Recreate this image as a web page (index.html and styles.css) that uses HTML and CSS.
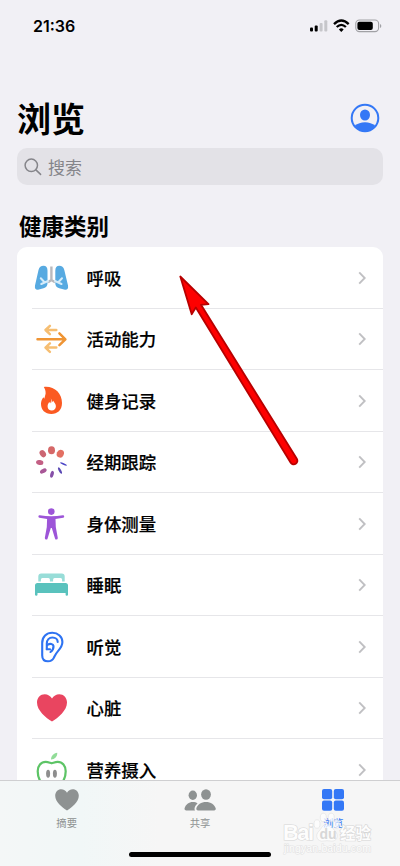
FILE: index.html
```html
<!DOCTYPE html>
<html lang="zh-CN">
<head>
<meta charset="utf-8">
<title>浏览</title>
<link rel="stylesheet" href="styles.css">
</head>
<body>
<div class="phone">
  <header class="status">
    <span class="time">21:36</span>
    <svg class="status-icons" width="74" height="20" viewBox="0 0 74 20">
      <rect x="2" y="12.5" width="3" height="4" rx="1"/><rect x="6.7" y="10.5" width="3" height="6" rx="1"/>
      <rect x="11.6" y="8" width="3" height="8.5" rx="1" fill="#c6c6ca"/><rect x="16.3" y="5.2" width="3" height="11.3" rx="1" fill="#c6c6ca"/>
      <g fill="none" stroke="#000" stroke-width="2.3"><path d="M26 9.1Q33.3 1.9 40.7 9.1"/><path d="M28.7 12Q33.3 7.7 37.9 12"/></g>
      <path d="M33.3 17l-2.4-2.6Q33.3 12.3 35.7 14.4z"/>
      <rect x="47.8" y="5" width="22.8" height="11.6" rx="3.6" fill="none" stroke="#a1a1a5" stroke-width="1.1"/>
      <rect x="49.4" y="6.7" width="15.4" height="8.2" rx="2"/><path d="M72 9v4q1.3-.6 1.3-2T72 9" fill="#a1a1a5"/>
    </svg>
  </header>
  <div class="title-row">
    <h1>浏览</h1>
    <svg width="30" height="30" viewBox="0 0 30 30"><circle cx="15" cy="15" r="13.3" fill="none" stroke="#3478f6" stroke-width="2"/><ellipse cx="15" cy="12" rx="5" ry="5.6" fill="#3478f6"/><path d="M4.700 22.800Q9 19.200 15 19.200T25.300 22.800Q21.500 28.500 15 28.500T4.700 22.800" fill="#3478f6"/></svg>
  </div>
  <div class="search">
    <svg width="18" height="18" viewBox="0 0 18 18" fill="none" stroke="#85858a" stroke-width="1.5" stroke-linecap="round"><circle cx="7.3" cy="7.3" r="6.2"/><path d="M11.9 11.9l4.7 4.5"/></svg>
    <span>搜索</span>
  </div>
  <h2>健康类别</h2>
  <main class="list">
    <div class="row">
      <svg class="icon" viewBox="0 0 40 40">
        <path fill="#57aae1" d="M11.5 7.8q4 0 4 5v12.5q0 4-4 5L6 31.8Q2.3 32 3 27.5L6.5 12Q7.7 7.8 11.5 7.8zM27.3 7.8q-4 0-4 5v12.5q0 4 4 5L33 31.8Q36.7 32 36 27.5L32.3 12Q31.1 7.8 27.3 7.8z"/>
        <path d="M19.4 8.5V22L16 24.2M19.4 22l3.6 2.2" fill="none" stroke="#b9b9bd" stroke-width="2.4"/>
        <path d="M16 23L9.3 26M12.5 24.3L8.8 20.3M23 23l6.5 3M26.3 24.3L30 20.3" stroke="#d5ecfa" stroke-width="2" fill="none" stroke-linecap="round"/>
      </svg><span>呼吸</span><svg class="chevron" viewBox="0 0 8 14"><path d="M1.2 1.4L6.7 7L1.2 12.6"/></svg>
    </div>
    <div class="row">
      <svg class="icon" viewBox="0 0 40 40" fill="none" stroke-linecap="round" stroke-linejoin="round" stroke-width="2.5"><path stroke="#f6be72" d="M24.3 11H13.7M17.9 6.8L13.5 11l4.4 4.2M24.3 28.6H13.7M17.9 24.4l-4.4 4.2 4.4 4.2"/><path stroke="#ef9535" d="M5.5 20.3H33M27.4 14.4l6 5.9-6 5.9"/></svg>
      <span>活动能力</span><svg class="chevron" viewBox="0 0 8 14"><path d="M1.2 1.4L6.7 7L1.2 12.6"/></svg>
    </div>
    <div class="row">
      <svg class="icon" viewBox="0 0 40 40"><path fill="#fb5a22" d="M11.8 6C22 4.8 30 12 30 22c0 7-4.5 11-10.6 11C13 33 9 28.8 9 23c0-3 1-5 2.3-6.800l1 1.600 1.300-5C13.800 10 13 7.700 11.800 6z"/><path fill="#fff" d="M18.800 17.500c1 1.500 1 3 .8 4.300l1.600-2c1.300 2 2.700 3.500 2.700 5.500 0 2.600-1.700 4.200-4.100 4.200s-4.200-1.600-4.200-4.100c0-1.900.8-3.200 1.600-4.400l1 1.200c.8-1.300 1.200-2.900.6-4.700z"/></svg>
      <span>健身记录</span><svg class="chevron" viewBox="0 0 8 14"><path d="M1.2 1.4L6.7 7L1.2 12.6"/></svg>
    </div>
    <div class="row">
      <svg class="icon" viewBox="0 0 40 40"><ellipse cx="19.5" cy="8.3" rx="3.5" ry="4" fill="#d56868"/><ellipse cx="28.3" cy="11.7" rx="3.5" ry="4" fill="#e37063" transform="rotate(25 28.3 11.7)"/><ellipse cx="10.8" cy="11.7" rx="2.9" ry="3.8" fill="#cc6673" transform="rotate(-35 10.8 11.7)"/><ellipse cx="7.7" cy="20.5" rx="3.7" ry="2.5" fill="#c35f84" transform="rotate(10 7.7 20.5)"/><ellipse cx="11.3" cy="29" rx="3.6" ry="2.1" fill="#a85797" transform="rotate(-28 11.3 29)"/><ellipse cx="20" cy="32.3" rx="1.7" ry="3.5" fill="#8650a8" transform="rotate(15 20 32.3)"/><ellipse cx="28" cy="28.6" rx="1.2" ry="3.6" fill="#5c4bb5" transform="rotate(-28 28 28.6)"/><ellipse cx="31.5" cy="22" rx="3.6" ry=".8" fill="#4a45c6" transform="rotate(25 31.5 22)"/></svg>
      <span>经期跟踪</span><svg class="chevron" viewBox="0 0 8 14"><path d="M1.2 1.4L6.7 7L1.2 12.6"/></svg>
    </div>
    <div class="row">
      <svg class="icon" viewBox="0 0 40 40"><g fill="#9d55d8"><circle cx="19.3" cy="7.6" r="3.3"/><path d="M7.8 11.3Q19.3 13.2 30.8 11.3a1.2 1.2 0 0 1 .4 2.4L23.5 15l.3 8 2 11q0 1.600-1.500 1.600-1 0-1.300-1.200L19.800 24h-1L15.600 34.400q-.3 1.200-1.300 1.200-1.500 0-1.500-1.600l2-11 .3-8-7.700-1.300a1.200 1.200 0 0 1 .4-2.400z"/></g></svg>
      <span>身体测量</span><svg class="chevron" viewBox="0 0 8 14"><path d="M1.2 1.4L6.7 7L1.2 12.6"/></svg>
    </div>
    <div class="row">
      <svg class="icon" viewBox="0 0 40 40"><path fill="#98ddd8" d="M9.3 8.500h20.400q3 0 3 3v4.900h-2.600v-2q0-1.500-1.500-1.500h-6q-1.500 0-1.500 1.500v2h-3.200v-2q0-1.500-1.500-1.500h-6q-1.500 0-1.500 1.500v2H6.300v-4.900q0-3 3-3z"/><path fill="#59c2bd" d="M5.500 18h28q2.500 0 2.500 2.500v9.300q0 1-1.200 1t-1.200-1v-1.900H5.500v1.900q0 1-1.200 1t-1.300-1v-9.300Q3 18 5.500 18z"/></svg>
      <span>睡眠</span><svg class="chevron" viewBox="0 0 8 14"><path d="M1.2 1.4L6.7 7L1.2 12.6"/></svg>
    </div>
    <div class="row">
      <svg class="icon" viewBox="0 0 40 40" fill="none" stroke="#2e73f2" stroke-width="2.1" stroke-linecap="round" stroke-linejoin="round"><path d="M10.2 16C10.2 9.500 14.500 5.800 20.300 5.800s10.100 4 10.100 9.300c0 4-2 6.500-4.600 9.300-2.300 2.500-3 4.500-4 6.500-1.200 2.300-3.300 3.400-5.800 3.400-3.600 0-5.800-2.300-5.800-5.800z"/><path d="M14.800 22.200v-5.700c0-3.600 2.300-6 5.600-6s5.300 2 5.300 4.500"/><path d="M15.500 17.800c2.500-1.600 5.700-1 6 1.200.2 2.700-1 4.500-3 6M14.800 22.200h3.200"/></svg>
      <span>听觉</span><svg class="chevron" viewBox="0 0 8 14"><path d="M1.2 1.4L6.7 7L1.2 12.6"/></svg>
    </div>
    <div class="row">
      <svg class="icon" viewBox="0 0 40 40"><path fill="#e94560" d="M20 33.600C14 30 5 22.700 5 14.600 5 9.700 8.500 6.300 12.700 6.300c3.100 0 5.700 1.700 7.300 4.300 1.600-2.600 4.200-4.300 7.300-4.300 4.200 0 7.700 3.400 7.700 8.300C35 22.700 26 30 20 33.600z"/></svg>
      <span>心脏</span><svg class="chevron" viewBox="0 0 8 14"><path d="M1.2 1.4L6.7 7L1.2 12.6"/></svg>
    </div>
    <div class="row">
      <svg class="icon" viewBox="0 0 40 40"><path d="M19.700 13.300c-2-.5-3.500-1.400-6-1.400-4.700 0-8 4-8 9.300 0 7.500 4.500 15 9 15 2 0 3-1 5-1s3 1 5 1c4.500 0 9-7.500 9-15 0-5.300-3.300-9.300-8-9.300-2.500 0-4 .9-6 1.400z" fill="none" stroke="#5dc466" stroke-width="2.2"/><path fill="#91dc98" d="M19 9.600c0-3.700 2.500-6.200 6.300-6.800 0 3.900-2.400 6.600-6.300 6.800z"/><ellipse cx="16.1" cy="23.8" rx="2" ry="4" fill="#8e8e8e"/><ellipse cx="22.9" cy="23.8" rx="2" ry="4" fill="#8e8e8e"/></svg>
      <span>营养摄入</span><svg class="chevron" viewBox="0 0 8 14"><path d="M1.2 1.4L6.7 7L1.2 12.6"/></svg>
    </div>
  </main>
  <nav class="tabs">
    <div class="tab"><svg width="34" height="24" viewBox="0 0 34 24"><path fill="#8e9292" d="M17 22.500C12 19.500 5.200 14 5.200 7.800 5.200 3.900 8 1.200 11.200 1.200c2.500 0 4.600 1.400 5.800 3.500 1.200-2.100 3.300-3.500 5.800-3.500 3.200 0 6 2.700 6 6.600C28.800 14 22 19.500 17 22.500z"/></svg><span>摘要</span></div>
    <div class="tab"><svg width="34" height="24" viewBox="0 0 34 24" fill="#8e9292"><ellipse cx="9.8" cy="7.3" rx="4.2" ry="4.7"/><ellipse cx="23" cy="6.500" rx="4.900" ry="5.200"/><path d="M3 22.400q-1.800 0-1.500-1.800C2.500 16.500 6 14 9.800 14c2 0 3.500.5 4.800 1.400-2 1.600-3 3.600-3.100 5.300q0 1 .5 1.700zM14.800 22.400q-1.800 0-1.500-1.800c.9-4 5-6.700 9.700-6.700s8.800 2.700 9.800 6.700q.3 1.800-1.500 1.800z"/></svg><span>共享</span></div>
    <div class="tab active"><svg width="34" height="24" viewBox="0 0 34 24" fill="#3478f6"><rect x="6" y="1" width="10.2" height="10.2" rx="2"/><rect x="17.8" y="1" width="10.2" height="10.2" rx="2"/><rect x="6" y="12.6" width="10.2" height="10.2" rx="2"/><rect x="17.8" y="12.6" width="10.2" height="10.2" rx="2"/></svg><span>浏览</span></div>
  </nav>
  <div class="home-bar"></div>
  <svg class="arrow" width="130" height="200" viewBox="0 0 130 200"><path d="M9.300 6.500L37.500 34.200 30 34.800 125.800 188.800A3.600 3.600 0 0 1 119.700 192.700L24.800 37.500 20.700 44.200z" fill="#fe0000" stroke="#b80000" stroke-width="1.800" stroke-linejoin="round"/></svg>
  <svg class="watermark" width="100" height="50" viewBox="0 0 100 50">
    <g class="mark"><text class="latin" x="3" y="31" textLength="31">Bai</text><text class="cjk" x="60" y="30" textLength="31">经验</text><text class="url" x="4" y="43" textLength="87">jingyan.baidu.com</text></g>
    <g fill="#fff" stroke="#dcdcdc" stroke-width=".6" fill-opacity=".85"><ellipse cx="37" cy="15" rx="3" ry="4.2"/><ellipse cx="43.3" cy="8.500" rx="3" ry="4.3"/><ellipse cx="51.2" cy="8.500" rx="3" ry="4.3"/><ellipse cx="56.500" cy="15" rx="3" ry="4.2"/><path d="M47 15c4 0 5 4 8 7 5 5 1 11-4 10q-4-.7-8 0c-5 1-9-5-4-10 3-3 4-7 8-7z"/></g>
    <text class="paw" x="39.500" y="30">du</text>
  </svg>
</div>
</body>
</html>
```
FILE: styles.css
```css
* { box-sizing: border-box; }
body { margin: 0; font-family: Inter, "Noto Sans CJK SC", sans-serif; color: #000; }
.phone { position: relative; width: 400px; height: 866px; overflow: hidden; background: #f1f0f5; display: flex; flex-direction: column; }
.status { height: 96px; flex: none; display: flex; justify-content: space-between; align-items: flex-start; padding: 15px 18px 0 33px; }
.time { font-size: 16px; font-weight: 600; line-height: 22px; }
.title-row { height: 52px; flex: none; display: flex; justify-content: space-between; align-items: flex-start; padding: 0 20px 0 17px; }
.title-row svg { margin-top: 7px; }
h1 { margin: 2px 0 0; font-size: 34px; line-height: 44px; font-weight: 700; }
.search { flex: none; height: 37px; margin: 0 17px; border-radius: 10px; background: #e3e2e7; display: flex; align-items: center; gap: 6px; padding-left: 7px; color: #85858a; font-size: 17px; }
h2 { margin: 24px 0 0 19px; height: 38px; font-size: 22.5px; line-height: 36px; font-weight: 700; flex: none; }
.list { margin: 0 17px; flex: 1; min-height: 0; overflow: hidden; border-radius: 10px 10px 0 0; background: #fff; }
.row { height: 61.5px; display: flex; align-items: center; padding-right: 17px; margin-left: 15px; font-size: 17.4px; font-weight: 500; -webkit-text-stroke: .2px #000; box-shadow: inset 0 -1px #e6e6e9; }
.row span { margin: 2px 0 0 14.5px; flex: 1; line-height: 26px; }
.icon { width: 40px; height: 40px; }
.chevron { width: 8px; height: 14px; fill: none; stroke: #c0c0c3; stroke-width: 1.9; }
.tabs { flex: none; height: 86px; border-top: 1px solid #cfcfd1; background: linear-gradient(90deg, #f4f7f7, #f1f7f7 20%, #f6f6f6 40%, #f6f6f6); display: grid; grid-template-columns: repeat(3, 1fr); padding-top: 7px; }
.tab { display: flex; flex-direction: column; align-items: center; color: #8e9292; font-size: 10.3px; }
.tab span { line-height: 16px; margin-top: 3px; }
.active { color: #3478f6; }
.home-bar { position: absolute; left: 129px; bottom: 9px; width: 142px; height: 5px; border-radius: 3px; background: #000; }
.arrow { position: absolute; left: 171px; top: 270px; }
.watermark { position: absolute; left: 280px; top: 809px; opacity: .8; }
.mark { fill: #fff; stroke: #cfcfcf; stroke-width: 1.2px; paint-order: stroke; }
.latin { font: 700 22px "Liberation Sans", sans-serif; }
.cjk { font: 700 15.5px "Noto Sans CJK SC", sans-serif; }
.url { font: 400 10.5px "Liberation Sans", sans-serif; stroke: #dedede; }
.paw { font: 700 14px "Liberation Sans", sans-serif; fill: #d0d0d0; }
```
